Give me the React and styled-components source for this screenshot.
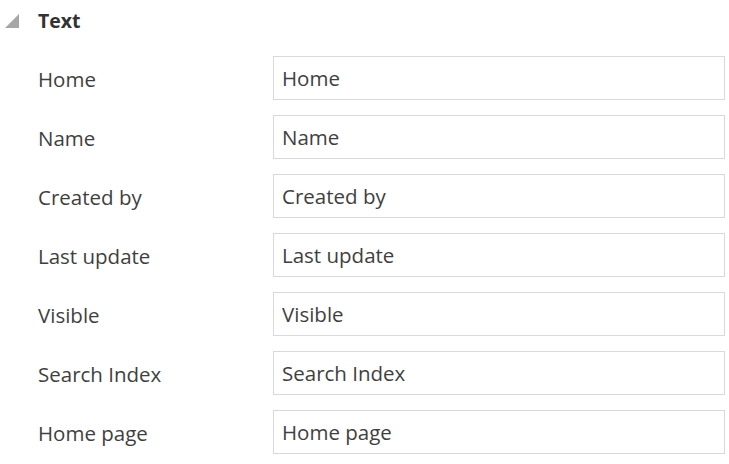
import React from "react";
import styled, { createGlobalStyle } from "styled-components";

const GlobalStyle = createGlobalStyle`
	body {
		margin: 0;
		background: #ffffff;
		font-family: "Open Sans", "Noto Sans", sans-serif;
		color: #444444;
	}
`;

const PANEL = styled.div`
	width: 729px;
	height: 464px;
	box-sizing: border-box;
	padding: 0 4px 0 0;
`;

const HEADER = styled.div`
	display: flex;
	align-items: center;
	height: 40px;
	padding-left: 5px;
`;

const ARROW = styled.span`
	width: 0;
	height: 0;
	border-left: 14px solid transparent;
	border-bottom: 14px solid #a6a6a6;
	margin-right: 19px;
	margin-top: 2px;
`;

const TITLE = styled.span`
	font-size: 19.5px;
	font-weight: 700;
	color: #333333;
`;

const LIST = styled.div`
	display: flex;
	flex-direction: column;
	gap: 15px;
	margin-top: 16px;
	padding-left: 38px;
`;

const ROW = styled.div`
	display: grid;
	grid-template-columns: 235px 1fr;
	align-items: center;
`;

const LABEL = styled.label`
	font-size: 20.5px;
	color: #3f3f3f;
	margin-top: 2px;
`;

const FIELD = styled.input`
	box-sizing: border-box;
	height: 44px;
	width: 100%;
	border: 1px solid #d9d9d9;
	background: #ffffff;
	padding: 0 8px;
	font-family: inherit;
	font-size: 20.5px;
	color: #3f3f3f;
	outline: none;
`;

const fields = ["Home", "Name", "Created by", "Last update", "Visible", "Search Index", "Home page"];

export default function App() {
	return (
		<PANEL>
			<GlobalStyle />
			<HEADER>
				<ARROW />
				<TITLE>Text</TITLE>
			</HEADER>
			<LIST>
				{fields.map((f) => (
					<ROW key={f}>
						<LABEL>{f}</LABEL>
						<FIELD defaultValue={f} />
					</ROW>
				))}
			</LIST>
		</PANEL>
	);
}
